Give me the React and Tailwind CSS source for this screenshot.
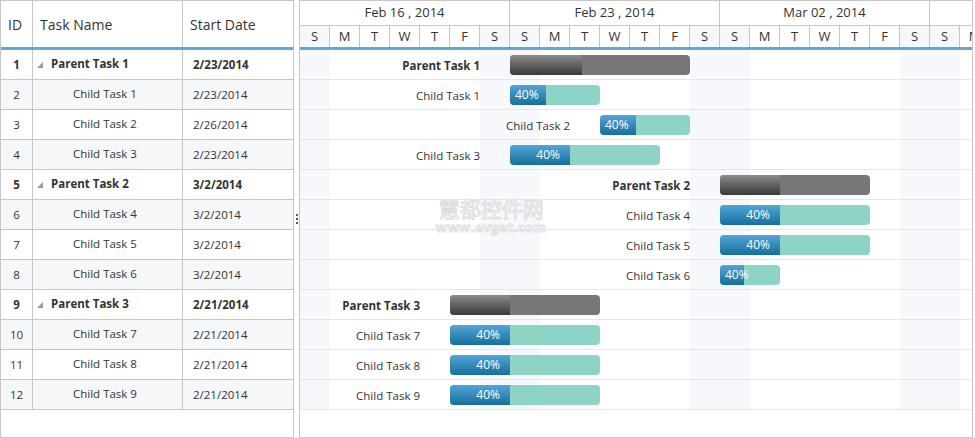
import React from 'react';

const FONT = { fontFamily: '"Open Sans", "Noto Sans", sans-serif' };

const TASKS = [
  { id: 1, name: 'Parent Task 1', date: '2/23/2014', parent: true, start: 7, days: 6 },
  { id: 2, name: 'Child Task 1', date: '2/23/2014', start: 7, days: 3 },
  { id: 3, name: 'Child Task 2', date: '2/26/2014', start: 10, days: 3 },
  { id: 4, name: 'Child Task 3', date: '2/23/2014', start: 7, days: 5 },
  { id: 5, name: 'Parent Task 2', date: '3/2/2014', parent: true, start: 14, days: 5 },
  { id: 6, name: 'Child Task 4', date: '3/2/2014', start: 14, days: 5 },
  { id: 7, name: 'Child Task 5', date: '3/2/2014', start: 14, days: 5 },
  { id: 8, name: 'Child Task 6', date: '3/2/2014', start: 14, days: 2 },
  { id: 9, name: 'Parent Task 3', date: '2/21/2014', parent: true, start: 5, days: 5 },
  { id: 10, name: 'Child Task 7', date: '2/21/2014', start: 5, days: 5 },
  { id: 11, name: 'Child Task 8', date: '2/21/2014', start: 5, days: 5 },
  { id: 12, name: 'Child Task 9', date: '2/21/2014', start: 5, days: 5 },
];

const WEEKS = ['Feb 16 , 2014', 'Feb 23 , 2014', 'Mar 02 , 2014', ''];
const DAYS = ['S', 'M', 'T', 'W', 'T', 'F', 'S'];
const DAY_W = 30;
const ALL_DAYS = Array.from({ length: 28 }, (_, i) => i);
const isWeekend = i => i % 7 === 0 || i % 7 === 6;

function Arrow() {
  return (
    <svg width="6" height="6" viewBox="0 0 6 6" className="mr-[8px] mt-[1px]">
      <polygon points="6,0 6,6 0,6" fill="#9a9a9a" />
    </svg>
  );
}

function GridPanel() {
  return (
    <div className="w-[294px] h-[438px] border border-[#c6c6c6] flex flex-col text-[#333]">
      <div className="flex h-[49px] border-b-[3px] border-[#64a6d4] text-[14px]">
        <div className="w-[32px] border-r border-[#c6c6c6] flex items-center pl-[7px]">ID</div>
        <div className="w-[150px] border-r border-[#c6c6c6] flex items-center pl-[7px]">Task Name</div>
        <div className="flex-1 flex items-center pl-[7px]">Start Date</div>
      </div>
      {TASKS.map((t, i) => (
        <div
          key={t.id}
          className={`flex h-[30px] border-b border-[#c6c6c6] text-[11.5px] ${i % 2 ? 'bg-[#f6f7f9]' : 'bg-white'} ${t.parent ? 'font-bold' : ''}`}
        >
          <div className="w-[32px] border-r border-[#c6c6c6] flex items-center justify-center">{t.id}</div>
          <div className={`w-[150px] border-r border-[#c6c6c6] flex items-center ${t.parent ? 'pl-[4px]' : 'pl-[40px]'}`}>
            {t.parent && <Arrow />}
            <span className="-mt-[1px]">{t.name}</span>
          </div>
          <div className="flex-1 flex items-center pl-[10px] mt-[1px]">{t.date}</div>
        </div>
      ))}
    </div>
  );
}

function Bar({ t }) {
  const width = t.days * DAY_W;
  const prog = Math.round(width * 0.4);
  const wide = prog >= 45;
  if (t.parent) {
    return (
      <div className="h-[20px] rounded-[4px] overflow-hidden flex bg-[#777777]" style={{ width }}>
        <div className="h-full bg-gradient-to-b from-[#8c8c8c] to-[#3a3a3a]" style={{ width: prog }} />
      </div>
    );
  }
  return (
    <div className="relative h-[20px] rounded-[4px] overflow-hidden flex bg-[#8dd4c6]" style={{ width }}>
      <div
        className={`h-full shrink-0 bg-gradient-to-b from-[#52a5d8] to-[#12709b] flex items-center text-white text-[12px] ${wide ? 'justify-end pr-[10px]' : 'justify-start pl-[5px] overflow-visible'}`}
        style={{ width: prog }}
      >
        <span className="whitespace-nowrap">40%</span>
      </div>
    </div>
  );
}

function GanttPanel() {
  return (
    <div className="w-[674px] h-[438px] border border-[#c6c6c6] overflow-hidden flex flex-col text-[#333]">
      <div className="flex h-[25px] border-b border-[#c6c6c6] text-[13px]">
        {WEEKS.map((w, i) => (
          <div key={i} className="w-[210px] shrink-0 border-r border-[#c6c6c6] flex items-center justify-center">
            {w}
          </div>
        ))}
      </div>
      <div className="flex h-[24px] border-b-[3px] border-[#64a6d4] text-[13px]">
        {ALL_DAYS.map(i => (
          <div
            key={i}
            className={`w-[30px] shrink-0 border-r border-[#c6c6c6] flex items-center justify-center ${isWeekend(i) ? 'bg-[#f5f8fa]' : 'bg-white'}`}
          >
            {DAYS[i % 7]}
          </div>
        ))}
      </div>
      <div className="grid">
        <div className="[grid-area:1/1] flex h-[360px]">
          {ALL_DAYS.map(i => (
            <div key={i} className={`w-[30px] shrink-0 ${isWeekend(i) ? 'bg-[#f7f8fb]' : 'bg-transparent'}`} />
          ))}
        </div>
        <div className="[grid-area:1/1] flex flex-col relative">
          {TASKS.map(t => (
            <div key={t.id} className="flex items-center h-[30px] border-b border-[#e6e6e6] text-[11.5px]">
              <div
                className={`shrink-0 text-right pr-[30px] mt-[2px] ${t.parent ? 'font-bold' : ''}`}
                style={{ width: t.start * DAY_W }}
              >
                {t.name}
              </div>
              <Bar t={t} />
            </div>
          ))}
          <div className="absolute left-[136px] top-[148px] flex flex-col items-center text-white leading-none select-none [-webkit-text-stroke:1px_#dedede]">
            <span className="text-[21px] tracking-[0px]" style={{ fontFamily: '"Noto Sans CJK SC", sans-serif' }}>慧都控件网</span>
            <span className="text-[13px] mt-[2px] font-bold tracking-[0.5px]">www.evget.com</span>
          </div>
        </div>
      </div>
    </div>
  );
}

function Splitter() {
  return (
    <div className="w-[5px] h-[438px] flex flex-col items-center justify-center gap-[2px]">
      <div className="w-[2px] h-[2px] bg-[#555]" />
      <div className="w-[2px] h-[2px] bg-[#555]" />
      <div className="w-[2px] h-[2px] bg-[#555]" />
    </div>
  );
}

export default function App() {
  return (
    <div className="w-[975px] h-[438px] bg-white flex overflow-hidden" style={FONT}>
      <GridPanel />
      <Splitter />
      <GanttPanel />
    </div>
  );
}
